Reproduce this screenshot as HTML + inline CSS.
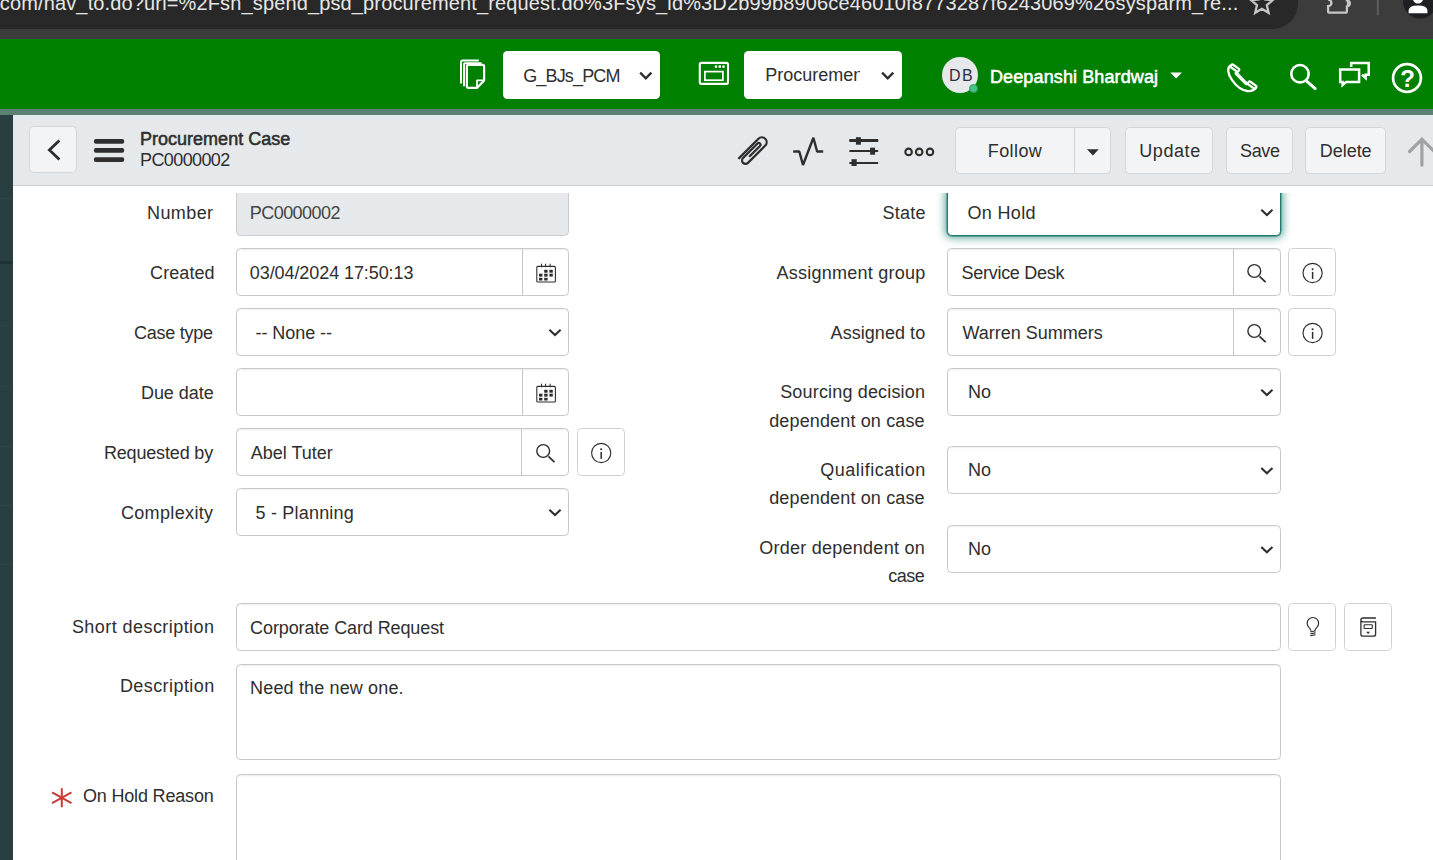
<!DOCTYPE html>
<html lang="en">
<head>
<meta charset="utf-8">
<title>Procurement Case PC0000002</title>
<style>
*{box-sizing:border-box;margin:0;padding:0}
html,body{width:1433px;height:860px;overflow:hidden;background:#fff}
body{position:relative;font-family:"Liberation Sans",sans-serif;color:#2e2e2e;font-size:18px}
.abs{position:absolute}
.t{position:absolute;white-space:nowrap;line-height:1;z-index:5}
#chrome{left:0;top:0;width:1433px;height:39.2px;background:#3c3c3c}
#pill{left:-60px;top:-22.4px;width:1358px;height:51px;background:#282828;border-radius:25.5px}
#green{left:0;top:39.2px;width:1433px;height:69.8px;background:#008000}
#strip{left:0;top:108.9px;width:1433px;height:5.9px;background:#5c8072}
#side{left:0;top:114.8px;width:13px;height:746px;background:#293e40}
.gsel{position:absolute;background:#fff;border-radius:4.5px;height:48px;top:51px}
#hdr{left:13px;top:114.8px;width:1420px;height:71px;background:#e6e9eb;border-bottom:1px solid #cbcfd2}
.btn{position:absolute;top:127.3px;height:46.3px;background:#f3f4f5;border:1px solid #d3d6d9;border-radius:4.5px}
#formclip{left:13px;top:193px;width:1420px;height:667px;overflow:hidden}
#form{position:absolute;left:-13px;top:-193px;width:1433px;height:860px}
.inp{position:absolute;height:47.3px;border:1px solid #c6c9cc;border-radius:4.5px;background:#fff;box-shadow:inset 0 2px 2px -1px rgba(0,0,0,.08)}
.sel{position:absolute;height:47.3px;border:1px solid #c6c9cc;border-radius:4.5px;background:#fff;box-shadow:inset 0 2px 2px -1px rgba(0,0,0,.06)}
.sq{position:absolute;width:47.6px;height:47.3px;border:1px solid #cfd2d5;border-radius:4.5px;background:#fff}
.dv{position:absolute;width:1px;background:#c6c9cc}
.ctr{transform:translateX(-50%)}
#proc{position:absolute;left:766.2px;top:51px;width:93.4px;height:48px;overflow:hidden;z-index:5}
svg{position:absolute;left:0;top:0;overflow:visible;pointer-events:none}
</style>
</head>
<body>
<div id="chrome" class="abs"></div>
<div id="pill" class="abs"></div>
<div id="green" class="abs"></div>
<div id="strip" class="abs"></div>
<div id="side" class="abs"></div>
<div class="abs" style="left:0;top:198px;width:13px;height:1px;background:#2e4345"></div><div class="abs" style="left:0;top:325px;width:13px;height:1px;background:#2e4345"></div><div class="abs" style="left:0;top:386px;width:13px;height:1px;background:#2e4345"></div><div class="abs" style="left:0;top:446px;width:13px;height:1px;background:#2e4345"></div><div class="abs" style="left:0;top:505px;width:13px;height:1px;background:#2e4345"></div><div class="abs" style="left:0;top:564px;width:13px;height:1px;background:#2e4345"></div><div class="abs" style="left:0;top:261px;width:13px;height:3px;background:#203234"></div>
<div class="gsel" style="left:503.2px;width:156.8px"></div>
<div class="gsel" style="left:744.1px;width:157.8px"></div>
<div class="abs" style="left:942px;top:56.8px;width:36px;height:36px;border-radius:50%;background:#e6e8ea"></div>
<div class="abs" style="left:968.8px;top:83.6px;width:9.6px;height:9.6px;border-radius:50%;background:#45c486;border:0.5px solid #2c9c63"></div>
<div id="hdr" class="abs"></div>
<div class="btn" style="left:29.3px;top:126.3px;width:48.2px"></div>
<div class="btn" style="left:955.3px;width:156.2px"></div>
<div class="dv" style="left:1074px;top:128px;height:45px;background:#d3d6d9"></div>
<div class="btn" style="left:1125.1px;width:87.6px"></div>
<div class="btn" style="left:1225.5px;width:67.4px"></div>
<div class="btn" style="left:1305.2px;width:81.3px"></div>
<div id="formclip" class="abs"><div id="form">
<div class="inp" style="left:236.2px;top:188.3px;width:332.5px;height:47.3px;background:#e6e9eb;box-shadow:none;border-color:#c9cdd0"></div>
<div class="inp" style="left:236.2px;top:248.3px;width:332.5px;height:47.3px;"></div>
<div class="dv" style="left:522px;top:249.3px;height:45.3px"></div>
<div class="sel" style="left:236.2px;top:308.3px;width:332.5px;height:47.3px;"></div>
<div class="inp" style="left:236.2px;top:368.3px;width:332.5px;height:47.3px;"></div>
<div class="dv" style="left:522px;top:369.3px;height:45.3px"></div>
<div class="inp" style="left:236.2px;top:428.3px;width:332.5px;height:47.3px;"></div>
<div class="dv" style="left:521px;top:429.3px;height:45.3px"></div>
<div class="sq" style="left:577.4px;top:428.3px"></div>
<div class="sel" style="left:236.2px;top:488.3px;width:332.5px;height:47.3px;"></div>
<div class="sel" style="left:947.1px;top:188.3px;width:333.5px;height:47.3px;border:1px solid #217a6e;box-shadow:0 0 0 .4px #217a6e,0 0 9px 2px rgba(31,132,118,.72)"></div>
<div class="inp" style="left:947.1px;top:248.3px;width:333.5px;height:47.3px;"></div>
<div class="dv" style="left:1233px;top:249.3px;height:45.3px"></div>
<div class="sq" style="left:1288.2px;top:248.3px"></div>
<div class="inp" style="left:947.1px;top:308.3px;width:333.5px;height:47.3px;"></div>
<div class="dv" style="left:1233px;top:309.3px;height:45.3px"></div>
<div class="sq" style="left:1288.2px;top:308.3px"></div>
<div class="sel" style="left:947.1px;top:368.3px;width:333.5px;height:47.3px;"></div>
<div class="sel" style="left:947.1px;top:446.4px;width:333.5px;height:47.3px;"></div>
<div class="sel" style="left:947.1px;top:525.4px;width:333.5px;height:47.3px;"></div>
<div class="inp" style="left:236.2px;top:603.3px;width:1044.9px;height:47.3px;"></div>
<div class="sq" style="left:1288.1px;top:603.4px"></div>
<div class="sq" style="left:1344.1px;top:603.4px"></div>
<div class="inp" style="left:236.2px;top:664.4px;width:1044.9px;height:95.7px;"></div>
<div class="inp" style="left:236.2px;top:774.3px;width:1044.9px;height:110px;"></div>
</div></div>
<svg width="1433" height="860" viewBox="0 0 1433 860" style="z-index:4">
<g transform="translate(536.2,263.7)" fill="#2e2e2e"><rect x="0.6" y="2.7" width="18.6" height="15.6" rx="1" fill="none" stroke="#2e2e2e" stroke-width="1.1"/><rect x="4.8" y="0" width="1" height="3.6"/><rect x="8.9" y="0" width="1" height="3.6"/><rect x="13.4" y="0" width="1" height="3.6"/><rect x="8" y="6.1" width="3.4" height="2.9"/><rect x="13.2" y="6.1" width="3.4" height="2.9"/><rect x="2.8" y="10" width="3.4" height="2.9"/><rect x="8" y="10" width="3.4" height="2.9"/><rect x="13.2" y="10" width="3.4" height="2.9"/><rect x="2.8" y="14.1" width="3.4" height="2.7"/><rect x="8" y="14.1" width="3.4" height="2.7"/></g>
<path d="M549.4,329.8 L555.0,335.1 L560.6,329.8" fill="none" stroke="#2e2e2e" stroke-width="2.1"/>
<g transform="translate(536.2,383.7)" fill="#2e2e2e"><rect x="0.6" y="2.7" width="18.6" height="15.6" rx="1" fill="none" stroke="#2e2e2e" stroke-width="1.1"/><rect x="4.8" y="0" width="1" height="3.6"/><rect x="8.9" y="0" width="1" height="3.6"/><rect x="13.4" y="0" width="1" height="3.6"/><rect x="8" y="6.1" width="3.4" height="2.9"/><rect x="13.2" y="6.1" width="3.4" height="2.9"/><rect x="2.8" y="10" width="3.4" height="2.9"/><rect x="8" y="10" width="3.4" height="2.9"/><rect x="13.2" y="10" width="3.4" height="2.9"/><rect x="2.8" y="14.1" width="3.4" height="2.7"/><rect x="8" y="14.1" width="3.4" height="2.7"/></g>
<g fill="none" stroke="#2e2e2e"><circle cx="543.2" cy="451.0" r="6.4" stroke-width="1.4"/><path d="M548.4,456.4 L554.5,462.1" stroke-width="1.8"/></g>
<g><circle cx="601.2" cy="453.0" r="9.6" fill="none" stroke="#2e2e2e" stroke-width="1.15"/><circle cx="601.2" cy="449.2" r="1.05" fill="#2e2e2e"/><rect x="600.45" y="451.90" width="1.5" height="7" fill="#2e2e2e"/></g>
<path d="M549.4,509.8 L555.0,515.1 L560.6,509.8" fill="none" stroke="#2e2e2e" stroke-width="2.1"/>
<path d="M1261.3,209.8 L1266.9,215.1 L1272.5,209.8" fill="none" stroke="#2e2e2e" stroke-width="2.1"/>
<g fill="none" stroke="#2e2e2e"><circle cx="1254.3" cy="271.0" r="6.4" stroke-width="1.4"/><path d="M1259.5,276.4 L1265.6,282.1" stroke-width="1.8"/></g>
<g><circle cx="1312.6" cy="273.0" r="9.6" fill="none" stroke="#2e2e2e" stroke-width="1.15"/><circle cx="1312.6" cy="269.2" r="1.05" fill="#2e2e2e"/><rect x="1311.85" y="271.90" width="1.5" height="7" fill="#2e2e2e"/></g>
<g fill="none" stroke="#2e2e2e"><circle cx="1254.3" cy="331.0" r="6.4" stroke-width="1.4"/><path d="M1259.5,336.4 L1265.6,342.1" stroke-width="1.8"/></g>
<g><circle cx="1312.6" cy="333.0" r="9.6" fill="none" stroke="#2e2e2e" stroke-width="1.15"/><circle cx="1312.6" cy="329.2" r="1.05" fill="#2e2e2e"/><rect x="1311.85" y="331.90" width="1.5" height="7" fill="#2e2e2e"/></g>
<path d="M1261.3,389.8 L1266.9,395.1 L1272.5,389.8" fill="none" stroke="#2e2e2e" stroke-width="2.1"/>
<path d="M1261.3,467.9 L1266.9,473.2 L1272.5,467.9" fill="none" stroke="#2e2e2e" stroke-width="2.1"/>
<path d="M1261.3,546.9 L1266.9,552.2 L1272.5,546.9" fill="none" stroke="#2e2e2e" stroke-width="2.1"/>
<polygon points="1261.90,-7.80 1264.96,-0.61 1272.74,0.08 1266.85,5.21 1268.60,12.82 1261.90,8.80 1255.20,12.82 1256.95,5.21 1251.06,0.08 1258.84,-0.61" fill="none" stroke="#c6c6c6" stroke-width="2.3" stroke-linejoin="miter"/>
<path d="M1328.1,-0.4 A3.3,3.3 0 0 1 1328.1,6.2 V11.2 Q1328.1,12.7 1329.6,12.7 H1345.4 Q1346.9,12.7 1346.9,11.2 V6.4 A3,3 0 0 0 1346.9,0.4 V-3" fill="none" stroke="#c6c6c6" stroke-width="2.3"/>
<path d="M1346.9,6.4 A3,3 0 0 0 1346.9,0.4 Z" fill="#c6c6c6"/>
<rect x="1376.8" y="-2" width="2" height="17.4" rx="1" fill="#5e5e5e"/>
<circle cx="1420" cy="1.6" r="17" fill="#1f2023"/>
<circle cx="1418" cy="-1.6" r="5.2" fill="#fff"/>
<path d="M1408.6,13.3 V10.6 Q1408.6,5.4 1418,5.4 Q1427.4,5.4 1427.4,10.6 V13.3 Z" fill="#fff"/>
<g fill="none" stroke="#ffffff" stroke-width="2.2" stroke-linejoin="round"><path d="M461,83.4 V62 Q461,60.4 462.6,60.4 H478.8" stroke-width="2"/><path d="M464,86.2 V64.6 Q464,63.2 465.6,63.2 H481.6" stroke-width="2"/><path d="M468.4,64.9 H482.6 Q484.1,64.9 484.1,66.4 V80.6 L477.2,87.8 H468.4 Q466.9,87.8 466.9,86.3 V66.4 Q466.9,64.9 468.4,64.9 Z"/><path d="M484.1,80.4 H477 V87.6" stroke-width="1.8"/></g>
<g fill="none" stroke="#ffffff"><rect x="699.8" y="62.9" width="28.2" height="21" rx="1.6" stroke-width="2.1"/><rect x="704.9" y="71.6" width="18" height="8.6" stroke-width="1.7"/></g><g fill="#ffffff"><rect x="714.8" y="65.4" width="2.4" height="2.4"/><rect x="718.6" y="65.4" width="2.4" height="2.4"/><rect x="722.3" y="65.4" width="2.4" height="2.4"/></g>
<path d="M640.2,72.6 L645.8,78.4 L651.4,72.6" fill="none" stroke="#2e2e2e" stroke-width="2.3"/>
<path d="M882.1,72.6 L887.7,78.4 L893.3,72.6" fill="none" stroke="#2e2e2e" stroke-width="2.3"/>
<path d="M1170.3,72.4 H1181.9 L1176.1,78.6 Z" fill="#ffffff"/>
<g fill="none" stroke="#ffffff" stroke-width="2.3" stroke-linecap="round" stroke-linejoin="round"><rect x="-4.7" y="-1.7" width="9.4" height="3.4" rx="1.4" transform="translate(1234.9,68.1) rotate(36)"/><rect x="-4.7" y="-1.7" width="9.4" height="3.4" rx="1.4" transform="translate(1252.1,85.1) rotate(36)"/><path d="M1230.2,65.6 C1227.2,68 1227.6,74 1231.9,79.9 C1236,85.8 1242,90.3 1247.3,91 C1251,91.4 1254,90.5 1255.6,88.2"/><path d="M1236.2,73.2 L1246.2,83.6" stroke-width="3.4"/></g>
<circle cx="1300" cy="73.7" r="8.7" fill="none" stroke="#ffffff" stroke-width="2.6"/><path d="M1306.6,81.2 L1315.2,88.6" stroke="#ffffff" stroke-width="3" stroke-linecap="round"/>
<g fill="none" stroke="#ffffff" stroke-width="2.5" stroke-linejoin="miter"><path d="M1351.2,67 V63 H1368.7 V74.8 H1365.6 V78 L1362,74.8"/><path d="M1340.2,69.4 H1359.1 V81.9 H1346.2 L1342.6,85 V81.9 H1340.2 Z"/></g>
<circle cx="1407" cy="78" r="13.9" fill="none" stroke="#ffffff" stroke-width="2.7"/>
<path d="M59.4,140.4 L49.4,149.9 L59.4,159.4" fill="none" stroke="#2e2e2e" stroke-width="2.8"/>
<rect x="93.9" y="139.1" width="30.3" height="4.7" rx="2" fill="#2e2e2e"/>
<rect x="93.9" y="148.1" width="30.3" height="4.7" rx="2" fill="#2e2e2e"/>
<rect x="93.9" y="157.2" width="30.3" height="4.7" rx="2" fill="#2e2e2e"/>
<g transform="translate(730,125) rotate(-45)"><path d="M-18,29.85 L10.4,29.85 A4.8,4.8 0 0 1 10.4,39.45 L-14.06,39.45 A3.45,3.45 0 0 1 -14.06,32.55 L6.4,32.55 A1.72,1.72 0 0 1 6.4,36 L-8.9,36" fill="none" stroke="#2e2e2e" stroke-width="2.25"/></g>
<path d="M793.2,151.5 H799.3 L803,165 L813.4,137.8 L817.1,151.5 H823.2" fill="none" stroke="#2e2e2e" stroke-width="2.4" stroke-linejoin="bevel"/>
<g fill="#2e2e2e"><rect x="849.1" y="139.1" width="29.3" height="2.8" rx="1"/><rect x="849.1" y="150" width="29.3" height="2.1" rx="1"/><rect x="849.1" y="161.9" width="29.3" height="2.1" rx="1"/><rect x="855.9" y="137.2" width="5" height="7.5"/><rect x="870.1" y="147.7" width="5" height="7"/><rect x="851.5" y="159.2" width="5.2" height="6.8"/></g>
<circle cx="908.6" cy="151.9" r="3.25" fill="none" stroke="#2e2e2e" stroke-width="2.1"/>
<circle cx="919.2" cy="151.9" r="3.25" fill="none" stroke="#2e2e2e" stroke-width="2.1"/>
<circle cx="930" cy="151.9" r="3.25" fill="none" stroke="#2e2e2e" stroke-width="2.1"/>
<path d="M1087,149.2 H1098.8 L1092.9,155.6 Z" fill="#2e2e2e"/>
<path d="M1409.6,151.5 L1421.9,139.2 L1434.2,151.5 M1421.9,139.6 V165.2" fill="none" stroke="#9fa2a5" stroke-width="3.2" stroke-linecap="round" stroke-linejoin="miter"/>
<g fill="none" stroke="#2e2e2e" stroke-width="1.15" stroke-linecap="round"><path d="M1310.9,630.4 Q1310.4,628.8 1308.9,627.3 A5.7,5.7 0 1 1 1316.9,627.3 Q1315.4,628.8 1314.9,630.4"/><path d="M1310.7,631.8 L1315.2,631 M1310.7,633.7 L1315.2,632.9 M1310.7,635.6 L1315.2,634.8" stroke-width="1.1"/></g>
<g fill="none" stroke="#2e2e2e" stroke-width="1.3"><path d="M1376,618 H1363 Q1360.9,618 1360.9,620 V634.2 Q1360.9,636.2 1362.9,636.2 H1373.6 Q1375.6,636.2 1375.6,634.2 V621.8 H1363 Q1360.9,621.8 1360.9,620"/><rect x="1364.1" y="624.8" width="8.2" height="3.7" rx="0.6" stroke-width="1.1"/></g><path d="M1366.1,631.8 H1370.1 L1368.1,634 Z" fill="#2e2e2e"/>
<path d="M61.8,788.2 V807.2 M52.10,792.30 L71.50,803.10 M52.10,803.10 L71.50,792.30" stroke="#c83c36" stroke-width="2" fill="none"/>
</svg>
<div id="proc"><div class="t procx" style="left:-1.00px;top:15.26px;font-size:18px;">Procurement</div></div>
<div class="t" style="left:-0.20px;top:-6.53px;font-size:20px;letter-spacing:0.139px;color:#e6e6e6;">com/nav_to.do?uri=%2Fsn_spend_psd_procurement_request.do%3Fsys_id%3D2b99b8906ce46010f8773287f6243069%26sysparm_re...</div>
<div class="t" style="left:523.20px;top:66.76px;font-size:18px;letter-spacing:-0.838px;">G_BJs_PCM</div>
<div class="t" style="left:949.00px;top:67.96px;font-size:16px;letter-spacing:1.500px;color:#2e2e3e;">DB</div>
<div class="t" style="left:990.00px;top:67.66px;font-size:18px;letter-spacing:0.118px;-webkit-text-stroke:0.55px;color:#ffffff;">Deepanshi Bhardwaj</div>
<div class="t" style="left:140.10px;top:130.06px;font-size:18px;-webkit-text-stroke:0.55px;">Procurement Case</div>
<div class="t" style="left:140.10px;top:150.56px;font-size:18px;letter-spacing:-0.612px;">PC0000002</div>
<div class="t" style="left:987.80px;top:141.66px;font-size:18px;letter-spacing:0.400px;">Follow</div>
<div class="t" style="left:1139.20px;top:141.56px;font-size:18px;letter-spacing:0.600px;">Update</div>
<div class="t" style="left:1240.00px;top:141.56px;font-size:18px;letter-spacing:-0.333px;">Save</div>
<div class="t" style="left:1319.80px;top:141.56px;font-size:18px;letter-spacing:-0.040px;">Delete</div>
<div class="t" style="left:147.10px;top:203.66px;font-size:18px;letter-spacing:0.380px;">Number</div>
<div class="t" style="left:150.10px;top:263.66px;font-size:18px;letter-spacing:0.083px;">Created</div>
<div class="t" style="left:133.90px;top:323.76px;font-size:18px;letter-spacing:-0.237px;">Case type</div>
<div class="t" style="left:140.90px;top:383.76px;font-size:18px;letter-spacing:-0.014px;">Due date</div>
<div class="t" style="left:103.90px;top:443.76px;font-size:18px;letter-spacing:-0.164px;">Requested by</div>
<div class="t" style="left:120.90px;top:503.76px;font-size:18px;letter-spacing:0.356px;">Complexity</div>
<div class="t" style="left:71.90px;top:617.66px;font-size:18px;letter-spacing:0.438px;">Short description</div>
<div class="t" style="left:119.90px;top:676.96px;font-size:18px;letter-spacing:0.430px;">Description</div>
<div class="t" style="left:82.90px;top:787.46px;font-size:18px;letter-spacing:-0.169px;">On Hold Reason</div>
<div class="t" style="left:249.80px;top:203.66px;font-size:18px;letter-spacing:-0.550px;color:#444;">PC0000002</div>
<div class="t" style="left:249.80px;top:263.66px;font-size:18px;letter-spacing:-0.083px;">03/04/2024 17:50:13</div>
<div class="t" style="left:255.60px;top:323.76px;font-size:18px;letter-spacing:-0.078px;">-- None --</div>
<div class="t" style="left:250.80px;top:443.76px;font-size:18px;">Abel Tuter</div>
<div class="t" style="left:255.60px;top:503.76px;font-size:18px;letter-spacing:0.191px;">5 - Planning</div>
<div class="t" style="left:250.10px;top:618.66px;font-size:18px;letter-spacing:-0.100px;">Corporate Card Request</div>
<div class="t" style="left:250.10px;top:678.66px;font-size:18px;letter-spacing:0.150px;">Need the new one.</div>
<div class="t" style="left:882.60px;top:203.66px;font-size:18px;letter-spacing:0.250px;">State</div>
<div class="t" style="left:776.60px;top:263.66px;font-size:18px;letter-spacing:0.233px;">Assignment group</div>
<div class="t" style="left:830.60px;top:323.76px;font-size:18px;letter-spacing:0.050px;">Assigned to</div>
<div class="t" style="left:780.20px;top:383.26px;font-size:18px;letter-spacing:0.169px;">Sourcing decision</div>
<div class="t" style="left:769.20px;top:411.76px;font-size:18px;letter-spacing:0.144px;">dependent on case</div>
<div class="t" style="left:820.20px;top:461.16px;font-size:18px;letter-spacing:0.492px;">Qualification</div>
<div class="t" style="left:769.20px;top:489.36px;font-size:18px;letter-spacing:0.144px;">dependent on case</div>
<div class="t" style="left:759.20px;top:539.26px;font-size:18px;letter-spacing:0.259px;">Order dependent on</div>
<div class="t" style="left:888.20px;top:567.46px;font-size:18px;letter-spacing:-0.467px;">case</div>
<div class="t" style="left:967.50px;top:203.66px;font-size:18px;letter-spacing:0.333px;">On Hold</div>
<div class="t" style="left:961.50px;top:263.66px;font-size:18px;letter-spacing:-0.273px;">Service Desk</div>
<div class="t" style="left:962.50px;top:323.76px;font-size:18px;">Warren Summers</div>
<div class="t" style="left:967.90px;top:383.26px;font-size:18px;letter-spacing:0.200px;">No</div>
<div class="t" style="left:967.90px;top:461.16px;font-size:18px;letter-spacing:0.200px;">No</div>
<div class="t" style="left:967.90px;top:539.56px;font-size:18px;letter-spacing:0.200px;">No</div>
<div class="t" style="left:1400.20px;top:67.28px;font-size:24px;font-weight:700;color:#ffffff;">?</div>
</body>
</html>
